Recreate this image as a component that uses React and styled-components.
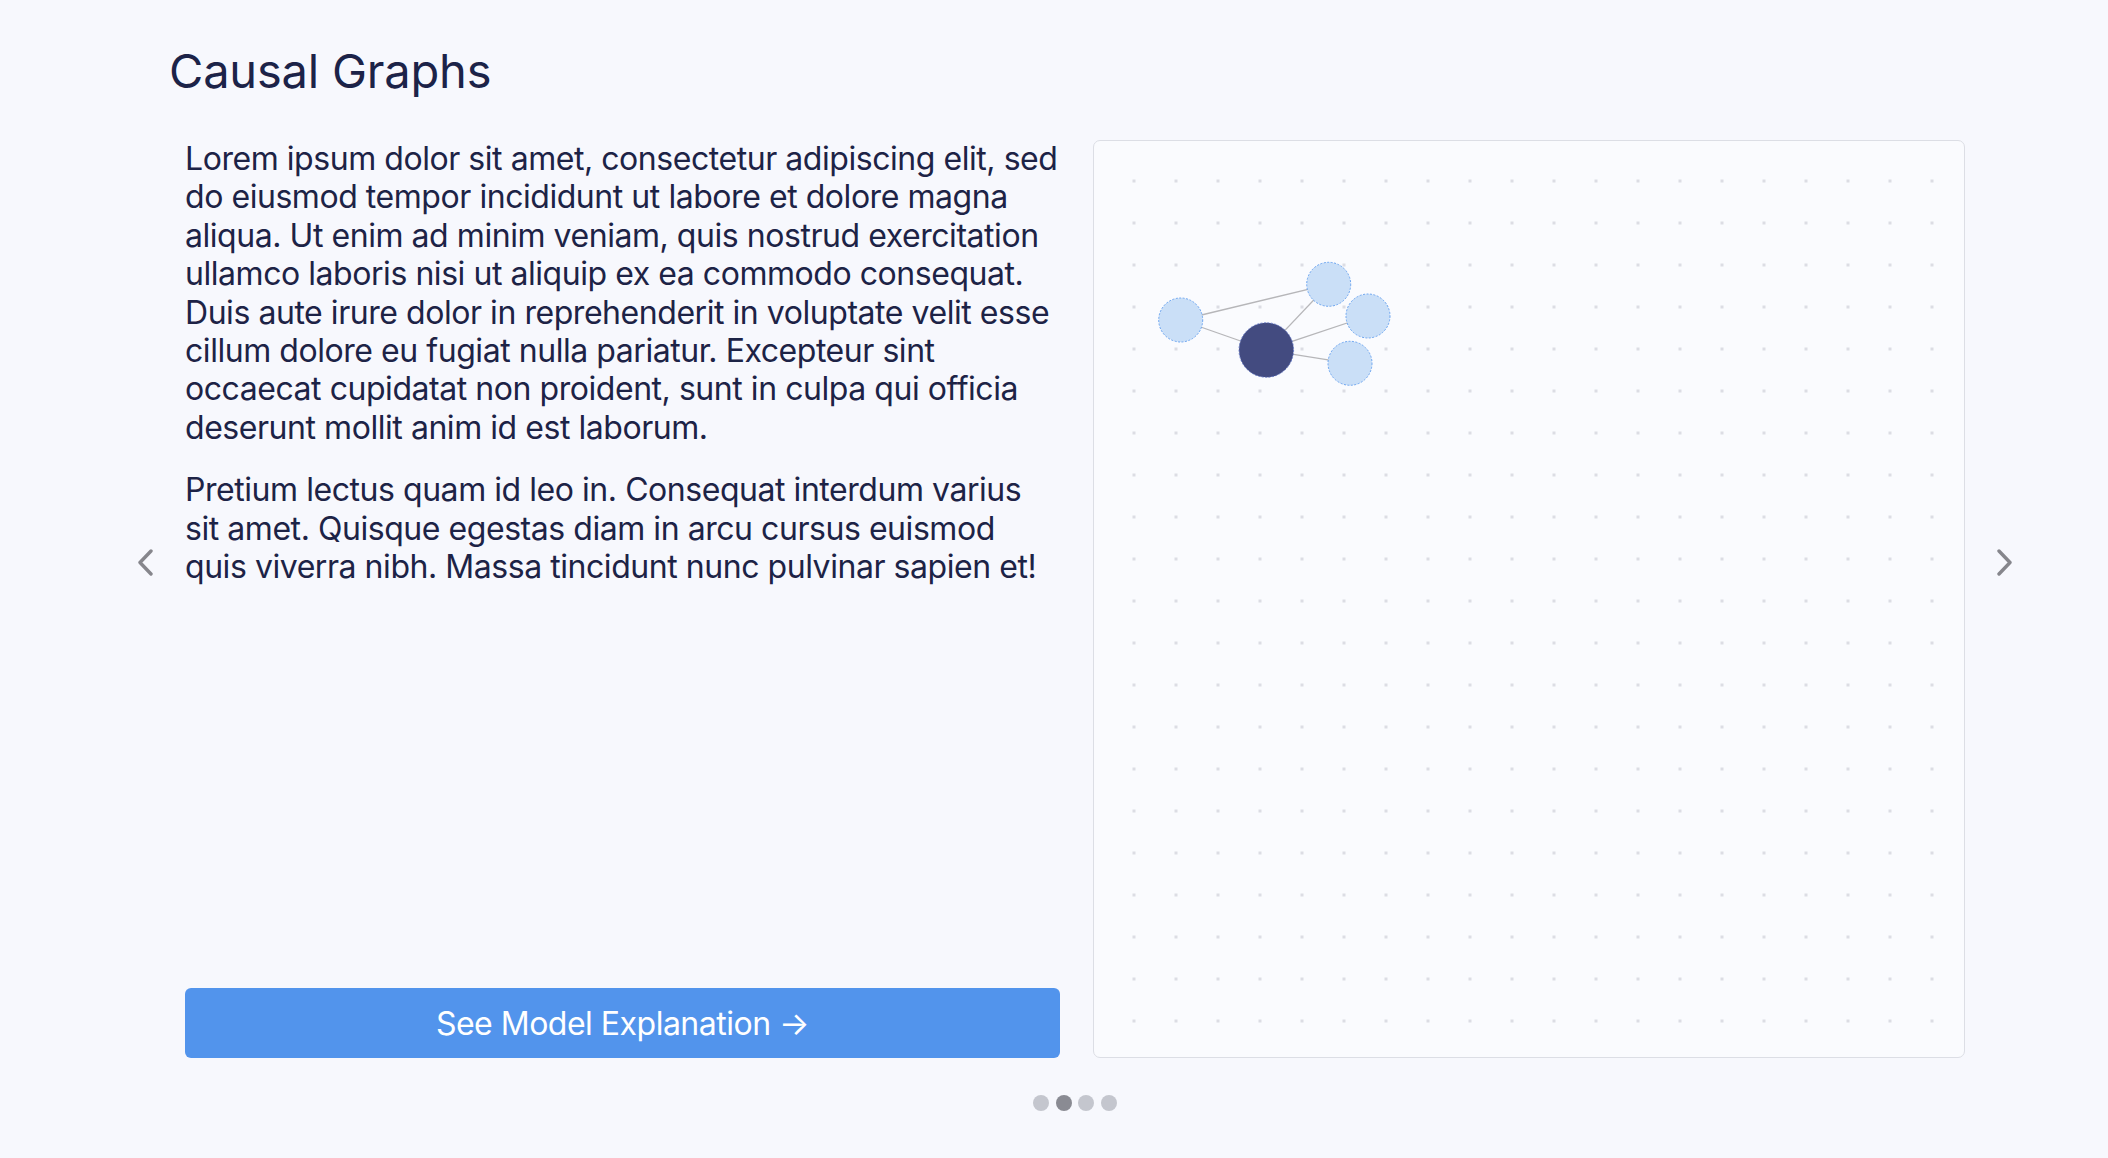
import styled, { createGlobalStyle } from 'styled-components';

const GlobalStyle = createGlobalStyle`
    html, body {
        margin: 0;
        padding: 0;
        background: #f7f8fd;
    }

    body {
        font-family: Inter, "Noto Sans", "Liberation Sans", sans-serif;
        color: #1d2346;
    }
`

const Page = styled.div`
    width: 2108px;
    min-height: 1158px;
    box-sizing: border-box;
    padding: 38px 78px 0 120px;
`

const Title = styled.h1`
    margin: 0 0 36px 49px;
    font-size: 47px;
    font-weight: 400;
    line-height: 66px;
    color: #1c2348;
    letter-spacing: -0.2px;
`

const Carousel = styled.div`
    display: flex;
    align-items: center;
`

const ArrowButton = styled.button`
    width: 50px;
    height: 60px;
    margin-bottom: 126px;
    padding: 0;
    border: 0;
    background: none;
    display: flex;
    align-items: center;
    justify-content: center;
    cursor: pointer;
    flex: none;
`

const Viewport = styled.div`
    flex: 1;
    margin: 0 15px;
    display: flex;
    flex-direction: column;
    align-items: center;
`

const Slide = styled.div`
    width: 100%;
    height: 918px;
    display: grid;
    grid-template-columns: 875px 872px;
    column-gap: 33px;
`

const TextColumn = styled.div`
    display: flex;
    flex-direction: column;
    justify-content: space-between;
`

const Paragraph = styled.p`
    margin: 0 0 24px;
    font-size: 32px;
    line-height: 38.4px;
    letter-spacing: -0.45px;
    color: #1d2346;
`

const ActionButton = styled.button`
    height: 70px;
    width: 100%;
    border: 0;
    border-radius: 6px;
    background: #5294ec;
    color: #ffffff;
    font-family: Inter, "Noto Sans", sans-serif;
    font-size: 32px;
    font-weight: 400;
    letter-spacing: -0.5px;
    cursor: pointer;
`

const Canvas = styled.div`
    box-sizing: border-box;
    border: 1.5px solid #dcdee5;
    border-radius: 7px;
    background: #fafbfe;
    overflow: hidden;

    svg {
        display: block;
    }
`

const Dots = styled.div`
    display: flex;
    gap: 6.5px;
    margin-top: 37px;
`

const Dot = styled.span`
    width: 16px;
    height: 16px;
    border-radius: 50%;
    background: ${({active}) => active ? '#8a8b93' : '#c4c6ce'};
`

const nodes = [
    {id: 'a', x: 86.7, y: 179, r: 22},
    {id: 'b', x: 234.7, y: 143.3, r: 22},
    {id: 'c', x: 274, y: 175, r: 22},
    {id: 'd', x: 256, y: 222.3, r: 22},
]
const center = {x: 172.3, y: 209, r: 27.3}
const edges = [['a', 'b'], ['a', 'center'], ['center', 'b'], ['center', 'c'], ['center', 'd']]

function pos(id) {
    return id === 'center' ? center : nodes.find(n => n.id === id);
}

function Chevron({dir}) {
    const points = dir === 'left' ? '14,2 3,13.5 14,25' : '2,2 13,13.5 2,25';
    return (
        <svg width="17" height="27" viewBox="0 0 17 27">
            <polyline points={points} fill="none" stroke="#86868c" strokeWidth="3.4" strokeLinecap="round" strokeLinejoin="round"/>
        </svg>
    )
}

function GraphCanvas() {
    return (
        <Canvas>
            <svg width="870" height="916">
                <defs>
                    <pattern id="grid" x="0" y="0" width="42" height="42" patternUnits="userSpaceOnUse">
                        <rect x="38.5" y="38.5" width="3" height="3" fill="#dcdde4"/>
                    </pattern>
                </defs>
                <rect width="870" height="916" fill="url(#grid)"/>
                {edges.map(([from, to]) => {
                    const p = pos(from);
                    const q = pos(to);
                    return <line key={from + to} x1={p.x} y1={p.y} x2={q.x} y2={q.y} stroke="#b6b6b9" strokeWidth="1.3"/>
                })}
                {nodes.map(n => (
                    <circle key={n.id} cx={n.x} cy={n.y} r={n.r} fill="#cadff7" stroke="#6aa4f0" strokeWidth="1" strokeDasharray="2 1.5"/>
                ))}
                <circle cx={center.x} cy={center.y} r={center.r} fill="#434b80" stroke="#5d74c6" strokeWidth="0.8" strokeDasharray="2 1.5"/>
            </svg>
        </Canvas>
    )
}

export default function App() {
    return (
        <>
            <GlobalStyle/>
            <Page>
                <Title>Causal Graphs</Title>
                <Carousel>
                    <ArrowButton aria-label="Previous">
                        <Chevron dir="left"/>
                    </ArrowButton>
                    <Viewport>
                        <Slide>
                            <TextColumn>
                                <div>
                                    <Paragraph>
                                        Lorem ipsum dolor sit amet, consectetur adipiscing elit, sed do eiusmod tempor incididunt ut labore et dolore magna aliqua. Ut enim ad minim veniam, quis nostrud exercitation ullamco laboris nisi ut aliquip ex ea commodo consequat. Duis aute irure dolor in reprehenderit in voluptate velit esse cillum dolore eu fugiat nulla pariatur. Excepteur sint occaecat cupidatat non proident, sunt in culpa qui officia deserunt mollit anim id est laborum.
                                    </Paragraph>
                                    <Paragraph>
                                        Pretium lectus quam id leo in. Consequat interdum varius sit amet. Quisque egestas diam in arcu cursus euismod quis viverra nibh. Massa tincidunt nunc pulvinar sapien et!
                                    </Paragraph>
                                </div>
                                <ActionButton>See Model Explanation →</ActionButton>
                            </TextColumn>
                            <GraphCanvas/>
                        </Slide>
                        <Dots>
                            <Dot/>
                            <Dot active/>
                            <Dot/>
                            <Dot/>
                        </Dots>
                    </Viewport>
                    <ArrowButton aria-label="Next">
                        <Chevron dir="right"/>
                    </ArrowButton>
                </Carousel>
            </Page>
        </>
    )
}
